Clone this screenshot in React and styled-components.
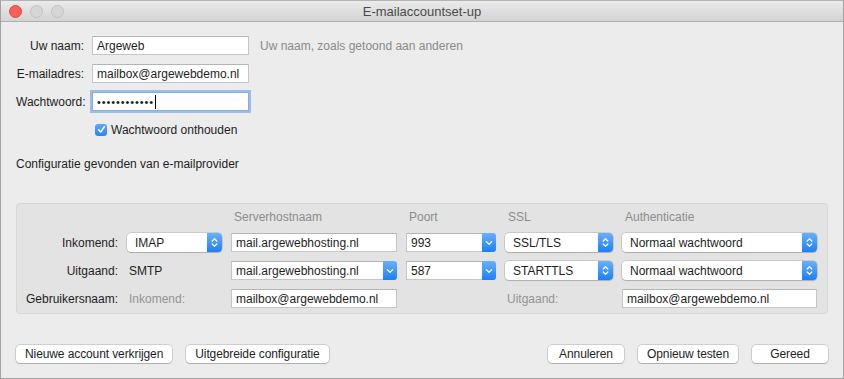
import styled, { createGlobalStyle } from "styled-components";

const GlobalStyle = createGlobalStyle`
    html, body {
        margin: 0;
        padding: 0;
        background: #ececec;
    }
    body {
        font-family: "Liberation Sans", Arial, sans-serif;
        font-size: 12px;
        color: #1e1e1e;
    }
`;

const Stepper = () => (
    <svg width="7" height="11" viewBox="0 0 7 11">
        <path d="M1.2 4 L3.5 1.7 L5.8 4 M1.2 7 L3.5 9.3 L5.8 7" fill="none" stroke="#fff" strokeWidth="1.3" strokeLinecap="round" strokeLinejoin="round" />
    </svg>
);

const Chevron = () => (
    <svg width="8" height="6" viewBox="0 0 8 6">
        <path d="M1.3 1.6 L4 4.3 L6.7 1.6" fill="none" stroke="#fff" strokeWidth="1.3" strokeLinecap="round" strokeLinejoin="round" />
    </svg>
);

const Check = () => (
    <svg width="9" height="9" viewBox="0 0 9 9">
        <path d="M1.6 4.8 L3.7 7 L7.4 1.8" fill="none" stroke="#fff" strokeWidth="1.6" strokeLinecap="round" strokeLinejoin="round" />
    </svg>
);

const PopUp = ({ children }) => (
    <SPopUp>
        <SPopUpText>{children}</SPopUpText>
        <SStepper><Stepper /></SStepper>
    </SPopUp>
);

const Combo = ({ children }) => (
    <SCombo>
        <SComboText>{children}</SComboText>
        <SComboButton><Chevron /></SComboButton>
    </SCombo>
);

export default function App() {
    return (
        <>
            <GlobalStyle />
            <SWindow>
                <STitleBar>
                    <SLights>
                        <SLight $color="#fc5f57" $edge="#de4741" />
                        <SLight $color="#d6d6d6" $edge="#c2c2c2" />
                        <SLight $color="#d6d6d6" $edge="#c2c2c2" />
                    </SLights>
                    <STitle>E-mailaccountset-up</STitle>
                    <span />
                </STitleBar>
                <SContent>
                    <SIdentity>
                        <SLabel>Uw naam:</SLabel>
                        <SField>Argeweb</SField>
                        <SHint>Uw naam, zoals getoond aan anderen</SHint>
                        <SLabel>E-mailadres:</SLabel>
                        <SField>mailbox@argewebdemo.nl</SField>
                        <span />
                        <SLabel>Wachtwoord:</SLabel>
                        <SField $focused>
                            <SDots>••••••••••••</SDots>
                            <SCaret />
                        </SField>
                        <span />
                        <span />
                        <SCheckRow>
                            <SCheckbox><Check /></SCheckbox>
                            Wachtwoord onthouden
                        </SCheckRow>
                    </SIdentity>
                    <SStatus>Configuratie gevonden van e-mailprovider</SStatus>
                    <SPanel>
                        <span />
                        <span />
                        <SHead>Serverhostnaam</SHead>
                        <SHead>Poort</SHead>
                        <SHead>SSL</SHead>
                        <SHead>Authenticatie</SHead>

                        <SRowLabel>Inkomend:</SRowLabel>
                        <PopUp>IMAP</PopUp>
                        <SField>mail.argewebhosting.nl</SField>
                        <Combo>993</Combo>
                        <PopUp>SSL/TLS</PopUp>
                        <PopUp>Normaal wachtwoord</PopUp>

                        <SRowLabel>Uitgaand:</SRowLabel>
                        <SPlain>SMTP</SPlain>
                        <Combo>mail.argewebhosting.nl</Combo>
                        <Combo>587</Combo>
                        <PopUp>STARTTLS</PopUp>
                        <PopUp>Normaal wachtwoord</PopUp>

                        <SRowLabel>Gebruikersnaam:</SRowLabel>
                        <SPlain $muted>Inkomend:</SPlain>
                        <SField>mailbox@argewebdemo.nl</SField>
                        <span />
                        <SPlain $muted>Uitgaand:</SPlain>
                        <SField>mailbox@argewebdemo.nl</SField>
                    </SPanel>
                    <SFooter>
                        <SGroup>
                            <SButton>Nieuwe account verkrijgen</SButton>
                            <SButton>Uitgebreide configuratie</SButton>
                        </SGroup>
                        <SGroup>
                            <SButton>Annuleren</SButton>
                            <SButton>Opnieuw testen</SButton>
                            <SButton>Gereed</SButton>
                        </SGroup>
                    </SFooter>
                </SContent>
            </SWindow>
        </>
    );
}

const SWindow = styled.div`
    width: 844px;
    height: 379px;
    box-sizing: border-box;
    border: 1px solid #a2a2a2;
    border-top-color: #b4b4b4;
    background: #ececec;
    display: flex;
    flex-direction: column;
`;

const STitleBar = styled.div`
    height: 20px;
    flex-shrink: 0;
    display: grid;
    grid-template-columns: 1fr auto 1fr;
    align-items: center;
    background: linear-gradient(#ebebeb, #d3d3d3);
    border-bottom: 1px solid #b0b0b0;
`;

const SLights = styled.div`
    display: flex;
    gap: 8px;
    padding-left: 8px;
`;

const SLight = styled.span`
    width: 11px;
    height: 11px;
    border-radius: 50%;
    background: ${p => p.$color};
    border: 0.5px solid ${p => p.$edge};
`;

const STitle = styled.div`
    font-size: 13px;
    color: #4a4a4a;
`;

const SContent = styled.div`
    flex: 1;
    display: flex;
    flex-direction: column;
    padding: 14px 15px 15px;
`;

const SIdentity = styled.div`
    display: grid;
    grid-template-columns: 68px 157px 1fr;
    grid-auto-rows: 19px;
    column-gap: 8px;
    row-gap: 9px;
    align-items: center;
`;

const SLabel = styled.div`
    text-align: right;
    white-space: nowrap;
`;

const SField = styled.div`
    height: 19px;
    box-sizing: border-box;
    display: flex;
    align-items: center;
    padding-left: 4px;
    background: #fff;
    border: 1px solid #c6c6c6;
    border-top-color: #b5b5b5;
    white-space: nowrap;
    overflow: hidden;
    ${p => p.$focused && `
        border-color: #86aee6;
        box-shadow: 0 0 0 2px rgba(104, 157, 232, 0.6);
    `}
`;

const SDots = styled.span`
    letter-spacing: 0.9px;
    font-size: 11px;
`;

const SCaret = styled.span`
    width: 1px;
    height: 14px;
    background: #000;
    margin-left: 1px;
`;

const SHint = styled.div`
    color: #8a8a8a;
    padding-left: 3px;
`;

const SCheckRow = styled.div`
    display: flex;
    align-items: center;
    gap: 4px;
    padding-left: 3px;
    white-space: nowrap;
`;

const SCheckbox = styled.span`
    width: 12px;
    height: 12px;
    border-radius: 3px;
    background: linear-gradient(#5ea6fb, #2a84f6);
    display: flex;
    align-items: center;
    justify-content: center;
`;

const SStatus = styled.div`
    margin-top: 18px;
    line-height: 15px;
`;

const SPanel = styled.div`
    margin-top: 31px;
    display: grid;
    grid-template-columns: 101px 95px 166px 90px 108px 195px;
    grid-template-rows: 14px 19px 19px 19px;
    column-gap: 9px;
    row-gap: 9px;
    align-items: center;
    padding: 6px 10px 5px 0;
    background: #e3e3e3;
    border: 1px solid #d7d7d7;
    border-radius: 4px;
`;

const SHead = styled.div`
    color: #8c8c8c;
    padding-left: 3px;
    align-self: end;
    line-height: 14px;
`;

const SRowLabel = styled.div`
    text-align: right;
    white-space: nowrap;
`;

const SPlain = styled.div`
    padding-left: 2px;
    color: ${p => (p.$muted ? "#939393" : "#1e1e1e")};
`;

const SPopUp = styled.div`
    height: 19px;
    display: flex;
    align-items: stretch;
    background: #fff;
    border-radius: 4px;
    box-shadow: 0 0 0 0.5px rgba(0, 0, 0, 0.22), 0 1px 1px rgba(0, 0, 0, 0.14);
    overflow: hidden;
`;

const SPopUpText = styled.span`
    flex: 1;
    display: flex;
    align-items: center;
    padding-left: 8px;
    white-space: nowrap;
`;

const SStepper = styled.span`
    width: 15px;
    display: flex;
    align-items: center;
    justify-content: center;
    background: linear-gradient(#6ab0fc, #1b80f8);
`;

const SCombo = styled.div`
    height: 19px;
    display: flex;
    align-items: stretch;
`;

const SComboText = styled.span`
    flex: 1;
    display: flex;
    align-items: center;
    padding-left: 4px;
    background: #fff;
    border: 1px solid #c6c6c6;
    border-top-color: #b5b5b5;
    border-right: none;
    white-space: nowrap;
    overflow: hidden;
`;

const SComboButton = styled.span`
    width: 14px;
    display: flex;
    align-items: center;
    justify-content: center;
    border-radius: 0 3px 3px 0;
    background: linear-gradient(#6ab0fc, #1b80f8);
`;

const SFooter = styled.div`
    margin-top: auto;
    display: flex;
    justify-content: space-between;
    align-items: center;
`;

const SGroup = styled.div`
    display: flex;
    gap: 14px;
`;

const SButton = styled.button`
    height: 18px;
    min-width: 76px;
    padding: 0 9px;
    font-family: "Liberation Sans", Arial, sans-serif;
    font-size: 12px;
    letter-spacing: -0.1px;
    color: #1e1e1e;
    background: #fff;
    border: none;
    border-radius: 4px;
    box-shadow: 0 0 0 0.5px rgba(0, 0, 0, 0.25), 0 1px 1px rgba(0, 0, 0, 0.15);
    white-space: nowrap;
`;
